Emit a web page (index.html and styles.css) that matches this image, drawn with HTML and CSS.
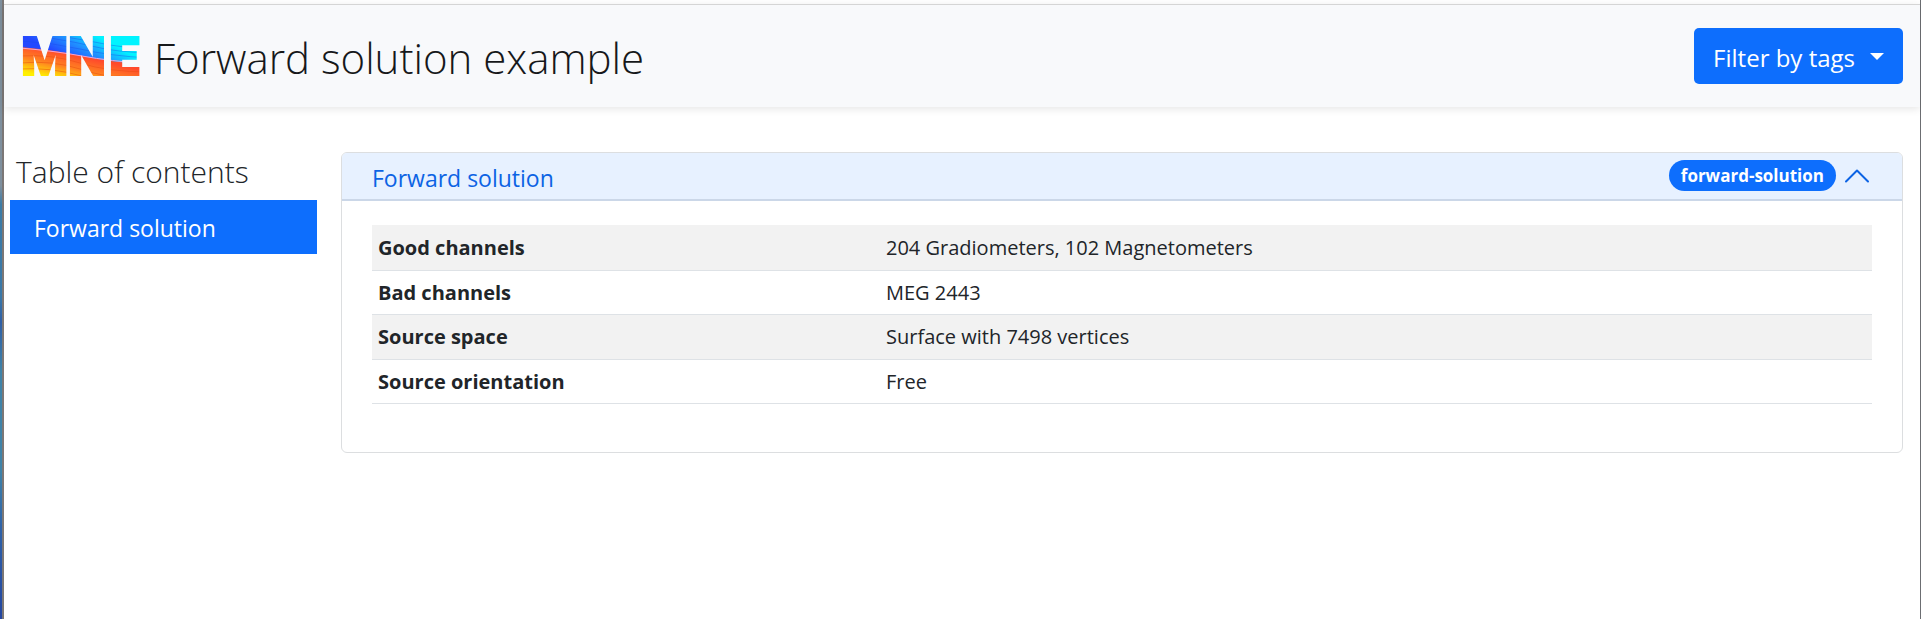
FILE: index.html
```
<!DOCTYPE html>
<html lang="en">
<head>
<meta charset="utf-8">
<meta name="viewport" content="width=device-width, initial-scale=1">
<title>Forward solution example</title>
<link rel="stylesheet" href="styles.css">
</head>
<body>
<div class="desktop-edge"></div>
<div class="window">
  <header class="navbar">
    <a class="brand" href="#top">
      <svg class="logo" width="120" height="40" viewBox="0 0 120 40" role="img" aria-label="MNE">
        <defs>
          <linearGradient id="cool" gradientUnits="userSpaceOnUse" x1="48" y1="24" x2="64" y2="-6">
            <stop offset="0" stop-color="#2448ff"/>
            <stop offset="0.5" stop-color="#2090ff"/>
            <stop offset="1" stop-color="#00f4ff"/>
          </linearGradient>
          <linearGradient id="warm" gradientUnits="userSpaceOnUse" x1="50" y1="19" x2="44" y2="46">
            <stop offset="0" stop-color="#ff4a2c"/>
            <stop offset="0.5" stop-color="#ff8420"/>
            <stop offset="1" stop-color="#fff000"/>
          </linearGradient>
          <pattern id="waves" patternUnits="userSpaceOnUse" x="-2" y="-1" width="130" height="60">
            <rect width="130" height="60" fill="url(#cool)"/>
            <path d="M0 12Q35 15 62 21T130 30V60H0Z" fill="url(#warm)"/>
            <path d="M0 13Q35 16 62 21T130 29" fill="none" stroke="#f5a4d4" stroke-width="1"/>
            <g fill="none" stroke="#1648e8" stroke-opacity="0.4">
              <path d="M0 6Q30 7 60 14T130 23"/>
              <path d="M30 3Q56 7 76 12T130 18"/>
              <path d="M46 2Q70 6 90 10T130 13"/>
            </g>
            <g fill="none" stroke="#e84a10" stroke-opacity="0.5">
              <path d="M0 21Q32 19 60 28T130 37"/>
              <path d="M0 28Q32 25 60 34T100 41"/>
              <path d="M0 34Q30 32 62 41"/>
            </g>
          </pattern>
        </defs>
        <text class="logo-text" x="-1 46 87" y="39" fill="url(#waves)" stroke="url(#waves)" stroke-width="2">MNE</text>
      </svg>
      <span class="brand-title">Forward solution example</span>
    </a>
    <button class="filter" type="button">Filter by tags <span class="caret"></span></button>
  </header>
  <div class="layout">
    <nav class="toc" aria-labelledby="toc-title">
      <h2 class="toc-title" id="toc-title">Table of contents</h2>
      <a class="toc-link" href="#forward">Forward solution</a>
    </nav>
    <main class="card" id="forward">
      <div class="card-header">
        <button class="card-toggle" type="button" aria-expanded="true">
          <span class="card-title">Forward solution</span>
          <span class="badge">forward-solution</span>
          <svg class="chevron" width="26" height="26" viewBox="0 0 26 26" fill="none" stroke="#0c63e4" stroke-width="2" stroke-linecap="round" stroke-linejoin="round" aria-hidden="true"><path d="M2 18.500L13 7.500L24 18.500"/></svg>
        </button>
      </div>
      <div class="card-body">
        <table class="info">
          <tbody>
            <tr><th scope="row">Good channels</th><td>204 Gradiometers, 102 Magnetometers</td></tr>
            <tr><th scope="row">Bad channels</th><td>MEG 2443</td></tr>
            <tr><th scope="row">Source space</th><td>Surface with 7498 vertices</td></tr>
            <tr><th scope="row">Source orientation</th><td>Free</td></tr>
          </tbody>
        </table>
      </div>
    </main>
  </div>
</div>
</body>
</html>
```
FILE: styles.css
```
* { box-sizing: border-box; }

body {
  margin: 0;
  display: flex;
  min-height: 100vh;
  background: #fff;
  color: #212529;
  font-family: "Open Sans", "Noto Sans", sans-serif;
  font-size: 20px;
}

button { font: inherit; border: 0; cursor: pointer; }
a { text-decoration: none; }

.desktop-edge {
  flex: none;
  width: 4px;
  border-right: 2px solid #7b7776;
  background: linear-gradient(#7e8f9d 0, #7e8f9d 30%, #3d7ca6 33%, #3a78a8 48%, #2f5fa6 52%, #3f83a8 60%, #3f83a8 76%, #2f63a8 85%, #2446a0 100%);
}

.window {
  flex: 1;
  min-width: 0;
  padding-top: 4px;
  border-right: 1px solid #6c6e72;
}

.navbar {
  display: flex;
  align-items: center;
  justify-content: space-between;
  padding: 23px 17px 23px 18px;
  border-top: 1px solid #d5d5d5;
  background: #f8f9fb;
  box-shadow: 0 2px 8px rgba(0, 0, 0, 0.1);
}

.brand {
  display: flex;
  align-items: center;
  gap: 12px;
  color: #16181a;
}

.logo { flex: none; overflow: visible; }

.logo-text {
  font-family: Roboto, sans-serif;
  font-size: 54px;
  font-weight: 900;
}

.brand-title {
  font-size: 42px;
  font-weight: 300;
  line-height: 48px;
  padding-top: 4px;
}

.filter {
  display: flex;
  align-items: center;
  gap: 15px;
  height: 56px;
  padding: 2px 19px 0;
  border-radius: 5px;
  background: #0d6efd;
  color: #fff;
  font-size: 24px;
}

.caret {
  margin-bottom: 2px;
  border: 7px solid transparent;
  border-top-color: #fff;
  border-bottom: 0;
}

.layout {
  display: grid;
  grid-template-columns: 307px 1fr;
  gap: 24px;
  align-items: start;
  padding: 45px 17px 0 6px;
}

.toc-title {
  margin: 0;
  padding: 0 6px 8px;
  font-size: 30px;
  font-weight: 300;
  line-height: 40px;
}

.toc-link {
  display: block;
  padding: 12px 24px 10px;
  background: #0d6efd;
  color: #fff;
  font-size: 23px;
  line-height: 32px;
}

.card {
  border: 1px solid #dcdee0;
  border-radius: 6px;
}

.card-header {
  border-bottom: 2px solid #cbd7e8;
  border-radius: 5px 5px 0 0;
  background: #e7f1ff;
}

.card-toggle {
  display: flex;
  align-items: center;
  width: 100%;
  height: 46px;
  padding: 0 32px 0 30px;
  background: none;
  text-align: left;
}

.card-title {
  flex: 1;
  padding-top: 4px;
  color: #0c63e4;
  font-size: 23px;
  line-height: 32px;
}

.badge {
  margin: 0 8px 2px 0;
  padding: 0 12px;
  border-radius: 16px;
  background: #0d6efd;
  color: #fff;
  font-size: 17px;
  font-weight: 700;
  line-height: 31px;
}

.chevron { flex: none; }

.card-body { padding: 24px 30px 48px; }

.info {
  width: 100%;
  border-collapse: collapse;
  table-layout: fixed;
  line-height: 28px;
}

.info th,
.info td {
  padding: 8px 4px 7px;
  border-bottom: 1px solid #dee2e6;
  text-align: left;
}

.info th { width: 34%; padding-left: 6px; font-weight: 700; }
.info tr:nth-child(odd) { height: 45px; background: #f2f2f2; }
```
